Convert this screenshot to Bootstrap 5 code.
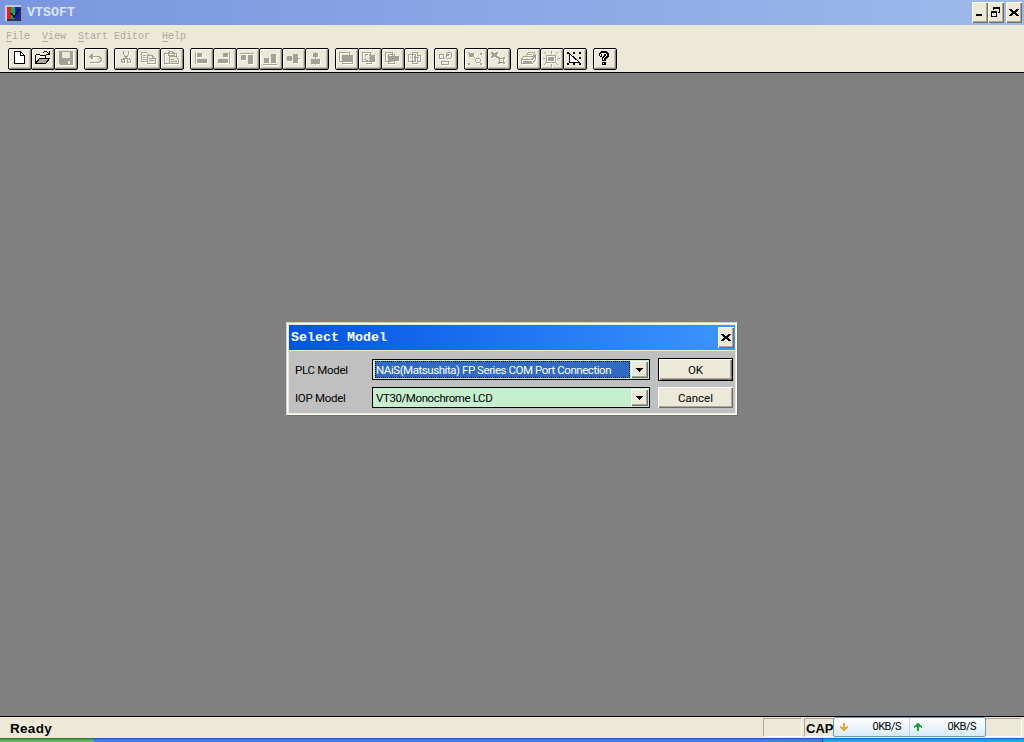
<!DOCTYPE html>
<html lang="en">
<head>
  <meta charset="UTF-8">
  <meta name="viewport" content="width=device-width, initial-scale=1">
  <title>VTSOFT</title>
  <link href="https://cdn.jsdelivr.net/npm/bootstrap@5.3.3/dist/css/bootstrap.min.css" rel="stylesheet">
  <style>
    body { background: #808080; font-family: "Liberation Sans", Arial, sans-serif; font-size: 12px; line-height: 1; color: #000; cursor: default; }
    svg { display: block; flex: none; shape-rendering: crispEdges; }

    .titlebar { height: 25px; padding: 0 2px 0 5px; background: linear-gradient(90deg, #7a96df, #9db9eb); }
    .title-text { font: bold 13.33px/1 "Liberation Mono", monospace; color: #d8e4f8; margin-left: 6px; }
    .face { background: #ece9d8; }
    .winbtn { width: 16px; height: 21px; padding: 0; border: 0; border-radius: 0; background: #ece9d8; box-shadow: inset 1px 1px #fff, inset -1px -1px #716f64, inset -2px -2px #aca899; }
    .winbtn-close { margin-left: 2px; }

    .menubar { height: 23px; padding: 6px 0 0 6px; gap: 12px; font: 10px/12px "Liberation Mono", monospace; color: #aca899; }
    .menubar u { text-underline-offset: 2px; }
    .toolbar { height: 25px; padding-left: 8px; gap: 6px; border-bottom: 1px solid #000; }
    .tool { width: 24px; height: 22px; padding: 0; border: 1px solid #000; border-radius: 2px; background: #ece9d8; box-shadow: inset 1px 1px #fff, inset -1px -1px #8c897b, inset -2px -2px #c9c5b2; }
    .tool + .tool { margin-left: -1px; }
    .tool svg { margin: -1px; color: #000; }
    .tool:disabled svg { color: #a5a192; filter: drop-shadow(1px 1px 0 #fff); }

    .dialog-box { width: 452px; height: 94px; margin-top: 249px; margin-left: 286px; background: #c0c0c0; border: 1px solid #d4d0c8; border-right-color: #716f64; border-bottom-color: #716f64; box-shadow: inset 0 0 0 1px #fff, inset 0 0 0 2px #ece9d8; padding: 2px; }
    .dialog-head { height: 26px; padding: 0 1px 0 2px; background: linear-gradient(90deg, #0054e3, #3d95ff); border-bottom: 1px solid #ece9d8; color: #fff; }
    .dialog-head .title-text { color: #fff; margin-left: 0; }
    .dialog-body { padding: 8px 2px 0 6px; gap: 7px; font: 11.5px/1 "Roboto", sans-serif; }
    .caption { width: 77px; letter-spacing: -.28px; padding-top: 2px; }
    .combo { width: 278px; height: 21px; border: 1px solid #000; background: #c6efce; padding: 1px; }
    .combo-text { height: 17px; line-height: 18px; padding-left: 1px; margin-left: 1px; white-space: nowrap; letter-spacing: -.4px; }
    .picked { background: #316ac5; color: #fff; outline: 1px dotted #000; outline-offset: -1px; margin-right: 1px; letter-spacing: -.45px; }
    .drop { width: 17px; height: 17px; background: #ece9d8; box-shadow: inset 1px 1px #fff, inset -1px -1px #716f64, inset -2px -2px #aca899; }
    .push { width: 75px; height: 21px; padding: 0; border: 0; border-radius: 0; font-size: 11.5px; line-height: 20px; color: #000; background: #ece9d8; box-shadow: inset 1px 1px #fff, inset -1px -1px #716f64, inset -2px -2px #aca899; }
    .push-default { height: 23px; margin: -1px 0; border: 1px solid #000; }

    .statusbar { height: 22px; border-top: 1px solid #000; padding: 1px 2px 0 10px; gap: 2px; font: bold 13px/1 "Liberation Sans", sans-serif; }
    .ready { font-size: 13.5px; letter-spacing: .3px; padding-top: 4px; }
    .pane { height: 19px; border: 1px solid #aca899; border-right-color: #fff; border-bottom-color: #fff; }
    .pane-num { width: 39px; }
    .pane-cap { width: 218px; padding: 3px 1px; }
    .meter { left: 833px; top: 717px; width: 153px; height: 20px; border: 1px solid #7297bd; border-radius: 2px; background: linear-gradient(#fff, #d9ebf7); font: 11px/20px "Roboto", sans-serif; letter-spacing: -.5px; }
    .meter-half { width: 75px; padding: 0 8px 0 5px; }
    .meter-half + .meter-half { border-left: 1px solid #c5d5e5; padding-left: 3px; }
    .start-edge { width: 94px; background: linear-gradient(#2c6a2c, #5ba85b 50%, #74b874); border-radius: 0 4px 0 0; }
    .task-edge { background: linear-gradient(#1f4fb5, #3f80ee 50%, #3c7cea); }
    .tray-edge { width: 202px; background: linear-gradient(#0c59b9, #16a0f5 40%, #18b0fa); border-left: 1px solid #0b4a9a; }
  </style>
</head>
<body class="vh-100 d-flex flex-column overflow-hidden">

  <!-- title bar -->
  <header class="titlebar d-flex align-items-center">
    <svg width="16" height="16"><path fill="#333" d="M0 0h16v16H0z"/><path fill="#c8c8d4" d="M0 0h16v2H2v14H0z"/><path fill="#f0182c" d="M2 2h4v12H2z"/><path fill="#00b840" d="M6 2h4v12H6z"/><path fill="#1818e0" d="M10 2h4v12h-4z"/><path d="M6 8l3 4 5-8" fill="none" stroke="#111" stroke-width="1.500"/></svg>
    <span class="title-text">VTSOFT</span>
    <div class="d-flex ms-auto">
      <button class="winbtn"><svg width="16" height="21"><path d="M4 12h6v2H4z"/></svg></button>
      <button class="winbtn"><svg width="16" height="21"><path fill="none" stroke="#000" d="M5.500 8V5.500h6v5H10M3.500 9.500h5v5h-5z"/><path d="M5 5h7v2H5zM3 9h6v2H3z"/></svg></button>
      <button class="winbtn winbtn-close"><svg width="16" height="21"><path d="M3 7h3v1h1v1h2V8h1V7h3v1h-1v1h-1v1h-1v1h1v1h1v1h1v1h-3v-1H9v-1H7v1H6v1H3v-1h1v-1h1v-1h1v-1H5V9H4V8H3z"/></svg></button>
    </div>
  </header>

  <nav class="menubar face d-flex">
    <span><u>F</u>ile</span>
    <span><u>V</u>iew</span>
    <span><u>S</u>tart Editor</span>
    <span><u>H</u>elp</span>
  </nav>

  <!-- toolbar, every icon is drawn on the full 24x22 button -->
  <div class="toolbar face d-flex">
    <div class="d-flex">
      <button class="tool"><svg width="24" height="22"><path fill="#fff" stroke="#000" d="M6.500 3.500h6l4 4v8h-10z"/><path fill="none" stroke="#000" d="M12.500 3.500v4h4"/></svg></button>
      <button class="tool"><svg width="24" height="22"><path fill="#fff" stroke="#000" d="M4.500 14.500v-7l1-1h3l1 1h5v3"/><path fill="#aca899" stroke="#000" d="M4.500 15.500l4-5h10l-4 5z"/><path fill="none" stroke="#000" d="M11.500 5.500l1-1 1-1h2l3 3M18.500 3v3.500H15"/></svg></button>
      <button class="tool" disabled><svg width="24" height="22"><path fill="currentColor" d="M5 3h14v14H6l-1-1z"/><path fill="#ece9d8" d="M8 4h8v6H8zM14 13h2v3h-2z"/></svg></button>
    </div>
    <div class="d-flex">
      <button class="tool" disabled><svg width="24" height="22"><path fill="none" stroke="currentColor" d="M6 14.500h9l2-2v-2l-2-2H7"/><path fill="currentColor" d="M5 8h1V7h1V6h2v5H7v-1H6V9H5z"/></svg></button>
    </div>
    <div class="d-flex">
      <button class="tool" disabled><svg width="24" height="22"><path fill="none" stroke="currentColor" d="M9.500 3v3l3 5M14.500 3v3l-3 5M9 10.500h1.500v4H8.500v-1h-1v-2h1.500zM13 10.500h2l1 1v3h-2.500z"/></svg></button>
      <button class="tool" disabled><svg width="24" height="22"><path fill="none" stroke="currentColor" d="M4.500 4.500h5l3 3v6h-8zM6 7.500h3M6 9.500h5M6 11.500h5"/><path fill="#ece9d8" stroke="currentColor" d="M10.500 7.500h5l3 3v5h-8z"/><path fill="none" stroke="currentColor" d="M12 10.500h3M12 12.500h5M15.500 7.500v3h3"/></svg></button>
      <button class="tool" disabled><svg width="24" height="22"><path fill="none" stroke="currentColor" d="M4.500 5.500h12v10h-12zM8 7.500v-2l2-2h2l2 2v2z"/><path fill="#ece9d8" stroke="currentColor" d="M9.500 8.500h6l3 3v4h-9z"/><path fill="none" stroke="currentColor" d="M11 11.500h3M11 13.500h6"/></svg></button>
    </div>
    <div class="d-flex">
      <button class="tool" disabled><svg width="24" height="22"><path fill="currentColor" d="M5 4h1v12H5zM7 5h5v4H7zM7 11h10v4H7z"/></svg></button>
      <button class="tool" disabled><svg width="24" height="22"><path fill="currentColor" d="M16 4h1v12h-1zM10 5h5v4h-5zM5 11h10v4H5z"/></svg></button>
      <button class="tool" disabled><svg width="24" height="22"><path fill="currentColor" d="M4 5h14v1H4zM5 7h5v5H5zM12 7h5v9h-5z"/></svg></button>
      <button class="tool" disabled><svg width="24" height="22"><path fill="currentColor" d="M4 16h14v1H4zM5 10h5v5H5zM12 6h5v9h-5z"/></svg></button>
      <button class="tool" disabled><svg width="24" height="22"><path fill="currentColor" d="M4 10h14v1H4zM5 8h5v5H5zM11 6h5v9h-5z"/></svg></button>
      <button class="tool" disabled><svg width="24" height="22"><path fill="currentColor" d="M10 4h1v13h-1zM8 5h5v4H8zM6 11h9v5H6z"/></svg></button>
    </div>
    <div class="d-flex">
      <button class="tool" disabled><svg width="24" height="22"><path fill="none" stroke="currentColor" d="M4.500 4.500h10v9h-10zM7.500 6.500v9h10v-2"/><path fill="currentColor" d="M7 7h11v7H7z"/></svg></button>
      <button class="tool" disabled><svg width="24" height="22"><path fill="none" stroke="currentColor" d="M12 4.500H4.500v9h7M12.500 4v3M7.500 15.500h6v-2"/><path fill="none" stroke="currentColor" stroke-dasharray="2 1" d="M7.500 6.500h4v6h-4z"/><path fill="currentColor" d="M12 7h5v7h-5z"/></svg></button>
      <button class="tool" disabled><svg width="24" height="22"><path fill="none" stroke="currentColor" d="M4.500 4.500h7v9h-7zM7.500 6.500h6v9h-6z"/><path fill="currentColor" d="M8 8h10v5H8z"/></svg></button>
      <button class="tool" disabled><svg width="24" height="22"><path fill="none" stroke="currentColor" d="M4.500 6.500h7v7h-7zM8.500 6V4.500h5v11h-5zM13 7.500h3.500v6H13"/><path fill="none" stroke="currentColor" stroke-dasharray="1 1" d="M10.500 6v8M6 9.500h9"/></svg></button>
    </div>
    <div class="d-flex">
      <button class="tool" disabled><svg width="24" height="22"><path fill="none" stroke="currentColor" d="M5.500 6.500h4v4h-4zM7.500 13.500h7v3h-7zM12.500 5.500l1-1h3l1 1v4l-1 1h-3l-1-1zM14 8l2-2"/><path fill="currentColor" d="M10 10h1v1h-1zM13 6h2v2h-2z"/></svg></button>
    </div>
    <div class="d-flex">
      <button class="tool" disabled><svg width="24" height="22"><path fill="currentColor" d="M5 5h5v4H5zM4 4h1v1H4zM10 9h1v1h-1zM16 5h2v2h-2zM4 15h2v2H4zM16 15h2v2h-2z"/><path fill="none" stroke="currentColor" d="M12.500 10.500h3l1 1v2l-1 1h-3l-1-1v-2z"/></svg></button>
      <button class="tool" disabled><svg width="24" height="22"><path fill="currentColor" d="M4 4h2v2H4zM9 4h2v2H9zM5 5h5v4H5zM4 8h2v2H4zM9 8h2v2H9zM11 9h2v2h-2zM16 9h2v2h-2zM11 14h2v2h-2zM16 14h2v2h-2z"/><path fill="none" stroke="currentColor" d="M12.500 10.500h4v4h-4z"/></svg></button>
    </div>
    <div class="d-flex">
      <button class="tool" disabled><svg width="24" height="22"><path fill="none" stroke="currentColor" d="M8.500 9l3-4.500h6l-2 5M4.500 10.500l2-2h10l2-2v5l-3 4h-11zM4 11.500h11l3-3M11 6.500h4"/><path fill="currentColor" d="M6 13h9v2H6z"/></svg></button>
      <button class="tool" disabled><svg width="24" height="22"><path fill="none" stroke="currentColor" d="M6.500 7.500h9v7h-9zM11 3v3M11 16v3M2.500 10.500H5M17 10.500h3M4 4l2 2M18 4l-2 2M4 17l2-2M18 17l-2-2"/><path fill="currentColor" d="M8 9h6v4H8z"/></svg></button>
      <button class="tool"><svg width="24" height="22"><path d="M4 4h2v2H4zM10 4h2v2h-2zM16 4h2v2h-2zM16 9h2v2h-2zM4 15h2v2H4zM10 15h2v2h-2zM16 15h2v2h-2z"/><path fill="#fff" stroke="#000" d="M6.500 5.500v9h10z"/></svg></button>
    </div>
    <div class="d-flex">
      <button class="tool"><svg width="24" height="22"><path d="M8 3h6v1h1v1h1v4h-1v1h-1v1h-1v2H9V9h1V8h1V6H9v3H7V8H6V5h1V4h1z"/><path fill="#fff" d="M8 5h5v1H8zM7 6h1v2H7zM13 6h1v2h-1zM12 8h1v1h-1zM11 9h1v1h-1zM10 10h1v2h-1z"/><path d="M9 14h4v3H9z"/><path fill="#fff" d="M10 15h1v1h-1z"/></svg></button>
    </div>
  </div>

  <!-- client area -->
  <main class="flex-grow-1">
    <section class="dialog-box">
      <div class="dialog-head d-flex align-items-center">
        <span class="title-text">Select Model</span>
        <button class="winbtn ms-auto"><svg width="16" height="21"><path d="M3 7h3v1h1v1h2V8h1V7h3v1h-1v1h-1v1h-1v1h1v1h1v1h1v1h-3v-1H9v-1H7v1H6v1H3v-1h1v-1h1v-1h1v-1H5V9H4V8H3z"/></svg></button>
      </div>
      <div class="dialog-body d-flex flex-column">
        <div class="d-flex align-items-center">
          <span class="caption">PLC Model</span>
          <div class="combo d-flex align-items-center">
            <span class="combo-text picked flex-grow-1">NAiS(Matsushita) FP Series COM Port Connection</span>
            <span class="drop"><svg width="17" height="17"><path d="M5 7h7v1h-1v1h-1v1H9v1H8v-1H7V9H6V8H5z"/></svg></span>
          </div>
          <button class="push push-default ms-2">OK</button>
        </div>
        <div class="d-flex align-items-center">
          <span class="caption">IOP Model</span>
          <div class="combo d-flex align-items-center">
            <span class="combo-text flex-grow-1">VT30/Monochrome LCD</span>
            <span class="drop"><svg width="17" height="17"><path d="M5 7h7v1h-1v1h-1v1H9v1H8v-1H7V9H6V8H5z"/></svg></span>
          </div>
          <button class="push ms-2">Cancel</button>
        </div>
      </div>
    </section>
  </main>

  <footer class="statusbar face d-flex">
    <span class="ready me-auto">Ready</span>
    <span class="pane pane-num"></span>
    <span class="pane pane-cap">CAP</span>
  </footer>

  <!-- network speed meter floating over the status bar -->
  <div class="meter position-absolute d-flex">
    <div class="meter-half d-flex align-items-center justify-content-between">
      <svg width="10" height="10"><path fill="#f0a428" d="M4 1h2v4h2V4h1v2H8v1H7v1H6v1H4V8H3V7H2V6H1V4h1v1h2z"/></svg>
      <span>0KB/S</span>
    </div>
    <div class="meter-half d-flex align-items-center justify-content-between">
      <svg width="10" height="10"><path fill="#18a830" d="M4 9h2V5h2v1h1V4H8V3H7V2H6V1H4v1H3v1H2v1H1v2h1V5h2z"/></svg>
      <span>0KB/S</span>
    </div>
  </div>

  <div class="d-flex flex-shrink-0 task-edge">
    <span class="start-edge pt-1"></span>
    <span class="tray-edge pt-1 ms-auto"></span>
  </div>

<script src="https://cdn.jsdelivr.net/npm/bootstrap@5.3.3/dist/js/bootstrap.bundle.min.js"></script>
</body>
</html>
